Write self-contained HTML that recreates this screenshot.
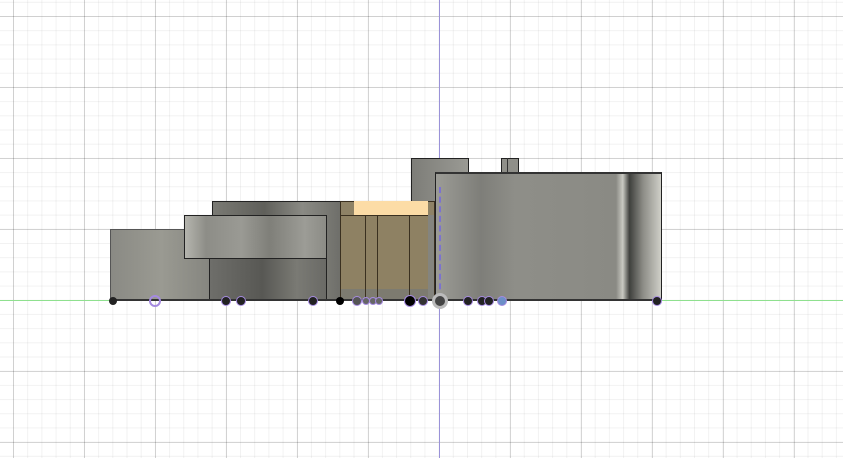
<!DOCTYPE html>
<html><head><style>
html,body{margin:0;padding:0;}
body{width:843px;height:458px;position:relative;overflow:hidden;background:#fff;
background-image:
linear-gradient(to right, rgba(0,0,0,0.14) 1px, transparent 1px),
linear-gradient(to bottom, rgba(0,0,0,0.14) 1px, transparent 1px),
linear-gradient(to right, rgba(0,0,0,0.05) 1px, transparent 1px),
linear-gradient(to bottom, rgba(0,0,0,0.05) 1px, transparent 1px);
background-size:71px 71px,71px 71px,14.2px 14.2px,14.2px 14.2px;
background-position:13px 16px,13px 16px,13px 16px,13px 16px;}
.b{position:absolute;box-sizing:border-box;border:1px solid #222;}
.d{position:absolute;width:8px;height:8px;border-radius:50%;background:#222;top:297px;box-shadow:0 0 0 1px #a58ae0;}
</style></head><body>
<div style="position:absolute;left:439px;top:0;width:1px;height:458px;background:#9a92d8"></div>
<div style="position:absolute;left:0;top:300px;width:843px;height:1px;background:#8fe08f"></div>
<div class="b" style="left:110px;top:229px;width:102px;height:72px;border-color:#555;background:linear-gradient(90deg,#8a8a84,#9a9a92 50%,#85857f)"></div>
<div class="b" style="left:212px;top:201px;width:130px;height:100px;background:linear-gradient(90deg,#7a7a74,#5f5f5a 40%,#8a8a84 70%,#6e6e69)"></div>
<div class="b" style="left:209px;top:258px;width:118px;height:43px;background:linear-gradient(90deg,#6e6e6a,#585854 45%,#7a7a74 75%,#6a6a66)"></div>
<div class="b" style="left:184px;top:215px;width:143px;height:44px;background:linear-gradient(90deg,#b5b5ae,#8d8d87 15%,#9a9a94 40%,#7f7f79 60%,#9c9c96 85%,#8c8c86)"></div>
<div class="b" style="left:411px;top:158px;width:58px;height:60px;background:linear-gradient(90deg,#7d7d78,#9a9a94)"></div>
<div class="b" style="left:340px;top:201px;width:95px;height:100px;background:#8e8266;border-color:#3a3020"></div>
<div style="position:absolute;left:354px;top:201px;width:74px;height:14px;background:#fcdca6"></div>
<div class="b" style="left:340px;top:215px;width:95px;height:86px;background:#8e8163;border-color:#3a3020"></div>
<div style="position:absolute;left:428px;top:215px;width:6px;height:85px;background:#84847e"></div>
<div style="position:absolute;left:341px;top:289px;width:87px;height:11px;background:#7d7b70"></div>
<div style="position:absolute;left:365px;top:215px;width:1px;height:85px;background:#3a3020"></div>
<div style="position:absolute;left:377px;top:215px;width:1px;height:85px;background:#3a3020"></div>
<div style="position:absolute;left:409px;top:215px;width:1px;height:85px;background:#3a3020"></div>
<div class="b" style="left:501px;top:158px;width:18px;height:16px;background:#8f8f89"></div>
<div style="position:absolute;left:507px;top:158px;width:1px;height:15px;background:#333"></div>
<div class="b" style="left:435px;top:172px;width:227px;height:129px;border-top:2px solid #333;background:linear-gradient(90deg,#9c9c96 0%,#7e7e79 20%,#8e8e88 35%,#8c8c86 60%,#8a8a84 80%,#c9c9c2 83%,#3f403d 86%,#8c8c86 92%,#cfcfc8 100%)"></div>
<div style="position:absolute;left:439px;top:187px;width:0;height:112px;border-left:2px dashed #7b72d0"></div>
<div style="position:absolute;left:110px;top:299px;width:552px;height:2px;background:#333"></div>
<div class="d" style="left:109px;box-shadow:none"></div>
<div class="d" style="left:151px;background:transparent;box-shadow:0 0 0 2px #a58ae0"></div>
<div class="d" style="left:222px"></div><div class="d" style="left:237px"></div>
<div class="d" style="left:309px"></div>
<div class="d" style="left:336px;box-shadow:none;background:#000"></div>
<div class="d" style="left:353px;background:#555"></div>
<div class="d" style="left:363px;background:#666;width:6px;height:6px;top:298px"></div>
<div class="d" style="left:370px;background:#666;width:6px;height:6px;top:298px"></div>
<div class="d" style="left:376px;background:#666;width:6px;height:6px;top:298px"></div>
<div class="d" style="left:405px;width:10px;height:10px;top:296px;background:#000"></div>
<div class="d" style="left:419px;background:#333"></div>
<div class="d" style="left:435px;width:10px;height:10px;top:296px;background:#444;box-shadow:0 0 0 3px #bbb"></div>
<div class="d" style="left:464px"></div>
<div class="d" style="left:478px"></div><div class="d" style="left:485px"></div>
<div class="d" style="left:498px;background:#6d8fc8"></div>
<div class="d" style="left:653px"></div>
</body></html>
